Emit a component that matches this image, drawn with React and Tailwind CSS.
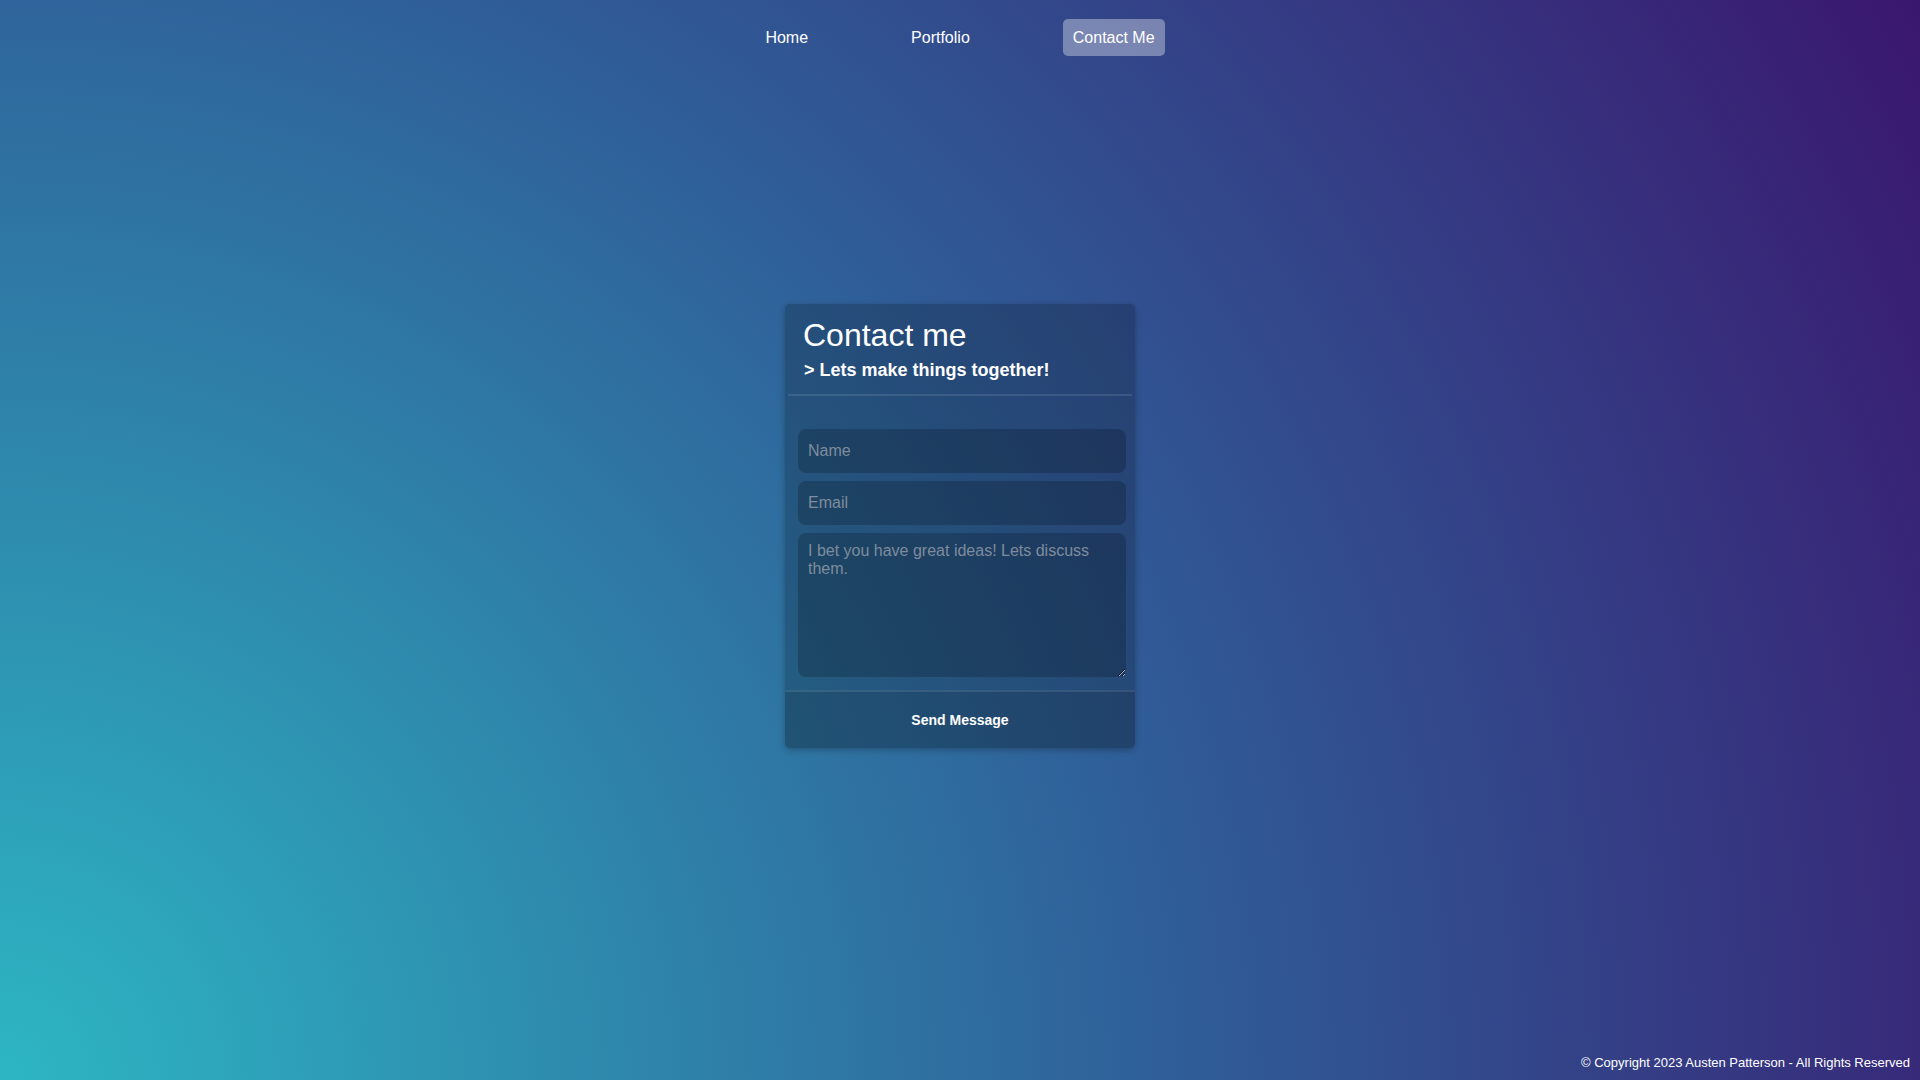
import React from "react";

export default function App() {
  return (
    <div className="min-h-screen flex flex-col text-white font-['Liberation_Sans',Arial,sans-serif] bg-[radial-gradient(circle_at_bottom_left,#2db6c3_0%,#2f5e98_53%,#3a176e_100%)]">
      <nav className="flex justify-center gap-[83px] pt-[19px]">
        <a className="px-[10px] py-[10px] text-[16px] leading-[17px] rounded-[5px] text-white">Home</a>
        <a className="px-[10px] py-[10px] text-[16px] leading-[17px] rounded-[5px] text-white">Portfolio</a>
        <a className="px-[10px] py-[10px] text-[16px] leading-[17px] rounded-[5px] text-white bg-white/35">Contact Me</a>
      </nav>

      <main className="flex justify-center mt-[248px]">
        <div className="w-[350px] rounded-[5px] bg-black/20 shadow-[0_2px_6px_rgba(0,0,0,0.25)] flex flex-col">
          <div className="mx-[3px] px-[15px] pt-[13px] pb-[13px] border-b-2 border-white/10">
            <h1 className="text-[32px] leading-[36px] font-normal">Contact me</h1>
            <p className="mt-[7px] text-[18px] leading-[21px] font-bold pl-[1px]">&gt; Lets make things together!</p>
          </div>
          <form className="flex flex-col">
            <div className="flex flex-col gap-[8px] pl-[13px] pr-[9px] pt-[33px] pb-[13px]">
              <input
                type="text"
                placeholder="Name"
                className="h-[44px] w-full rounded-[8px] bg-black/20 px-[10px] text-[16px] text-white outline-none placeholder:text-[#7e8c9d] font-['Liberation_Sans',Arial,sans-serif]"
              />
              <input
                type="email"
                placeholder="Email"
                className="h-[44px] w-full rounded-[8px] bg-black/20 px-[10px] text-[16px] text-white outline-none placeholder:text-[#7e8c9d] font-['Liberation_Sans',Arial,sans-serif]"
              />
              <textarea
                placeholder="I bet you have great ideas! Lets discuss them."
                className="h-[144px] w-full rounded-[8px] bg-black/20 px-[10px] py-[9px] text-[16px] leading-[18px] text-white outline-none placeholder:text-[#7e8c9d] font-['Liberation_Sans',Arial,sans-serif]"
              />
            </div>
            <button
              type="button"
              className="h-[58px] border-t-2 border-white/10 bg-black/10 rounded-b-[5px] text-[14px] font-bold text-white font-['Liberation_Sans',Arial,sans-serif]"
            >
              Send Message
            </button>
          </form>
        </div>
      </main>

      <footer className="mt-auto text-right text-[13px] leading-[16px] pr-[10px] pb-[9px] text-white">
        © Copyright 2023 Austen Patterson - All Rights Reserved
      </footer>
    </div>
  );
}
